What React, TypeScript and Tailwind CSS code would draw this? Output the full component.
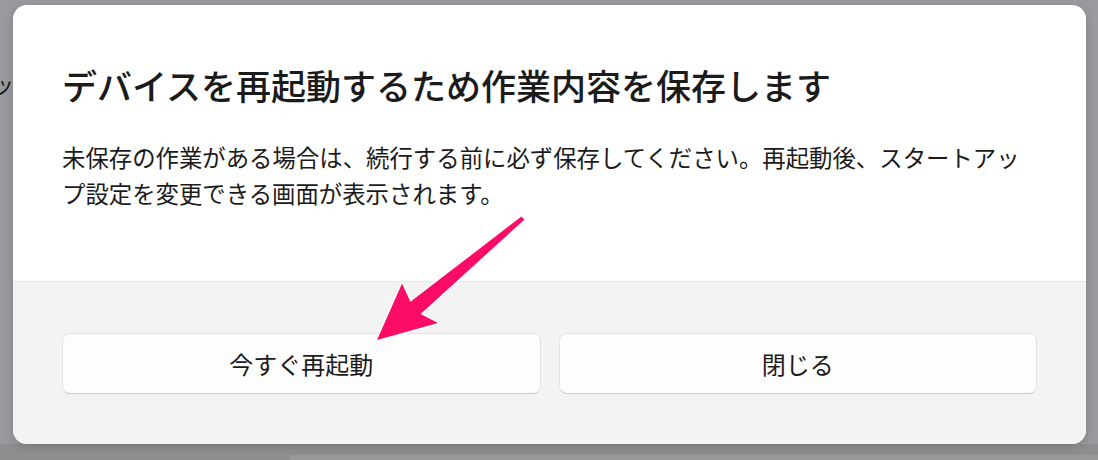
const JP = { fontFamily: '"Noto Sans CJK JP", "Noto Sans", sans-serif' };

function Arrow() {
  // pink pointer laid over the dialog
  return (
    <svg className="pointer-events-none absolute left-0 top-0" width="1098" height="460" viewBox="0 0 1098 460">
      <polygon
        points="524.5,219.5 420.6,314 438,323 377,340 402,283.5 410.4,301.8 521.5,216.5"
        fill="#fb0c66"
        stroke="#ffffff"
        strokeWidth="3"
        strokeLinejoin="round"
        paintOrder="stroke"
      />
    </svg>
  );
}

function DialogButton({ label }: { label: string }) {
  return (
    <button className="flex h-[61px] flex-1 items-center justify-center rounded-[8px] border border-[#e3e3e3] border-b-[#cdcdcd] bg-[#fdfdfd] text-[24px] text-[#1b1b1b]">
      {label}
    </button>
  );
}

export default function App() {
  return (
    <div className="relative h-[460px] w-[1098px] overflow-hidden bg-[#999a9d]" style={JP}>
      {/* page behind the dialog */}
      <div className="absolute left-[-8px] top-[63px] text-[22px] leading-[40px] text-[#1b1b1b]">ッ</div>
      <div className="absolute bottom-0 left-0 h-[16px] w-full bg-[#8d8e90]" />
      <div className="absolute bottom-0 left-[290px] h-[5px] w-[808px] bg-[#979899]" />

      <div className="absolute left-[13px] top-[5px] flex h-[439px] w-[1073px] flex-col overflow-hidden rounded-[14px] bg-white shadow-[0_2px_8px_rgba(0,0,0,0.18)]">
        <div className="flex h-[277px] flex-col border-b border-[#e5e5e5] px-[49px] pt-[58px]">
          <h1 className="text-[35px] font-medium leading-[44px] text-[#1b1b1b]">
            デバイスを再起動するため作業内容を保存します
          </h1>
          <p className="mt-[32px] text-[23.4px] leading-[36px] text-[#1b1b1b]">
            未保存の作業がある場合は、続行する前に必ず保存してください。再起動後、スタートアッ
            <br />
            プ設定を変更できる画面が表示されます。
          </p>
        </div>
        <div className="flex flex-1 gap-[18px] bg-[#f3f3f3] px-[49px] pt-[51px]">
          <DialogButton label="今すぐ再起動" />
          <DialogButton label="閉じる" />
        </div>
      </div>

      <Arrow />
    </div>
  );
}
